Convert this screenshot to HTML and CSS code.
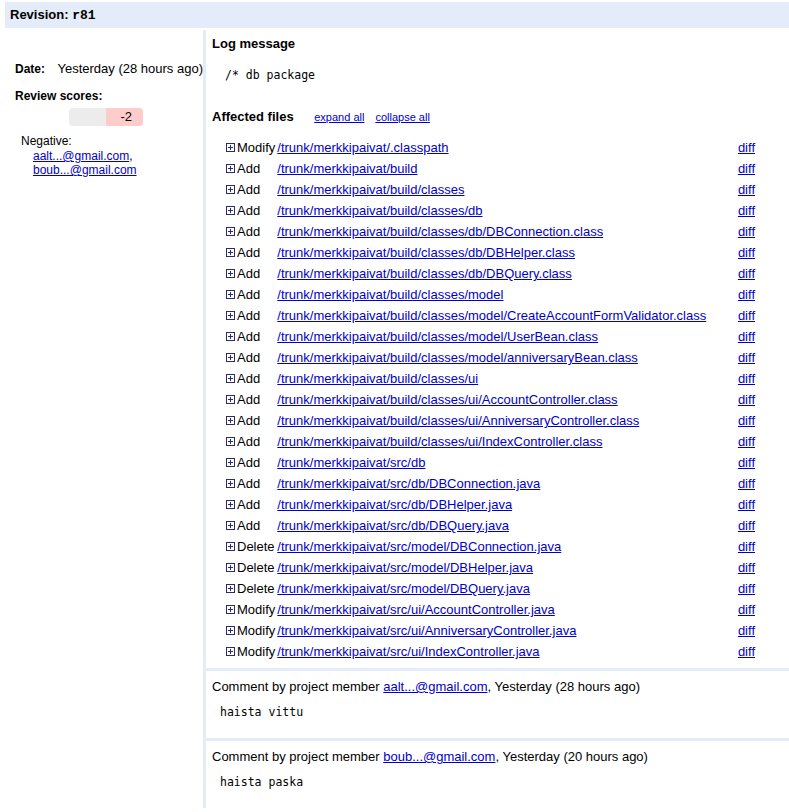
FILE: index.html
```html
<!DOCTYPE html>
<html>
<head>
<meta charset="utf-8">
<link rel="stylesheet" href="styles.css">
</head>
<body>
<div class="header">Revision: <span class="rev">r81</span></div>
<div class="layout">
  <div class="side">
    <div class="date-row"><span class="label">Date:</span><span>Yesterday (28 hours ago)</span></div>
    <div class="scores-title">Review scores:</div>
    <div class="scorebar"><span class="neutral"></span><span class="neg">-2</span></div>
    <div class="voters">
      <div>Negative:</div>
      <div class="voter-list"><a href="#">aalt...@gmail.com</a>,<br><a href="#">boub...@gmail.com</a></div>
    </div>
  </div>
  <div class="main">
    <div class="section files-section">
      <div class="title">Log message</div>
      <pre class="logmsg">/* db package</pre>
      <div class="title affected">Affected files <a class="small" href="#">expand all</a><a class="small" href="#">collapse all</a></div>
      <div class="files" id="files"></div>
    </div>
    <div class="section comment">
      <div>Comment by project member <a href="#">aalt...@gmail.com</a>, Yesterday (28 hours ago)</div>
      <pre class="ctext">haista vittu</pre>
    </div>
    <div class="section comment">
      <div>Comment by project member <a href="#">boub...@gmail.com</a>, Yesterday (20 hours ago)</div>
      <pre class="ctext">haista paska</pre>
    </div>
  </div>
</div>
<script src="script.js"></script>
</body>
</html>
```
FILE: script.js
```js
var rows = [
 ["Modify","/trunk/merkkipaivat/.classpath"],
 ["Add","/trunk/merkkipaivat/build"],
 ["Add","/trunk/merkkipaivat/build/classes"],
 ["Add","/trunk/merkkipaivat/build/classes/db"],
 ["Add","/trunk/merkkipaivat/build/classes/db/DBConnection.class"],
 ["Add","/trunk/merkkipaivat/build/classes/db/DBHelper.class"],
 ["Add","/trunk/merkkipaivat/build/classes/db/DBQuery.class"],
 ["Add","/trunk/merkkipaivat/build/classes/model"],
 ["Add","/trunk/merkkipaivat/build/classes/model/CreateAccountFormValidator.class"],
 ["Add","/trunk/merkkipaivat/build/classes/model/UserBean.class"],
 ["Add","/trunk/merkkipaivat/build/classes/model/anniversaryBean.class"],
 ["Add","/trunk/merkkipaivat/build/classes/ui"],
 ["Add","/trunk/merkkipaivat/build/classes/ui/AccountController.class"],
 ["Add","/trunk/merkkipaivat/build/classes/ui/AnniversaryController.class"],
 ["Add","/trunk/merkkipaivat/build/classes/ui/IndexController.class"],
 ["Add","/trunk/merkkipaivat/src/db"],
 ["Add","/trunk/merkkipaivat/src/db/DBConnection.java"],
 ["Add","/trunk/merkkipaivat/src/db/DBHelper.java"],
 ["Add","/trunk/merkkipaivat/src/db/DBQuery.java"],
 ["Delete","/trunk/merkkipaivat/src/model/DBConnection.java"],
 ["Delete","/trunk/merkkipaivat/src/model/DBHelper.java"],
 ["Delete","/trunk/merkkipaivat/src/model/DBQuery.java"],
 ["Modify","/trunk/merkkipaivat/src/ui/AccountController.java"],
 ["Modify","/trunk/merkkipaivat/src/ui/AnniversaryController.java"],
 ["Modify","/trunk/merkkipaivat/src/ui/IndexController.java"]
];
var icon = '<svg class="plus" width="9" height="9" viewBox="0 0 9 9"><rect x="0.5" y="0.5" width="8" height="8" fill="#fff" stroke="#2b2b66"/><path d="M2 4.5H7M4.5 2V7" stroke="#2b2b66" stroke-width="1"/></svg>';
var html = "";
rows.forEach(function(r){
  html += '<div class="act">' + icon + '<span>' + r[0] + '</span></div>' +
          '<div class="path"><a href="#">' + r[1] + '</a></div>' +
          '<div class="diff"><a href="#">diff</a></div>';
});
document.getElementById("files").innerHTML = html;
```
FILE: styles.css
```css
body {
  margin: 0;
  padding: 2px 0 0 5px;
  font-family: "Liberation Sans", Arial, sans-serif;
  font-size: 13px;
  color: #000;
  background: #fff;
}
a { color: #0000cc; }
.header {
  background: #e5ecf9;
  height: 26px;
  line-height: 26px;
  padding-left: 5px;
  font-weight: bold;
}
.rev {
  font-family: "Liberation Mono", "Courier New", monospace;
  font-size: 13px;
}
.layout {
  display: flex;
  margin-top: 2px;
}
.side {
  width: 198px;
  flex: none;
  padding-top: 31px;
  line-height: 16px;
  white-space: nowrap;
}
.date-row {
  display: flex;
  padding-left: 10px;
}
.date-row .label {
  font-weight: bold;
  width: 44px;
  font-size: 12px;
}
.scores-title {
  font-weight: bold;
  padding-left: 10px;
  margin-top: 11px;
  font-size: 12px;
}
.scorebar {
  display: flex;
  margin: 4px 0 0 64px;
  width: 74px;
  height: 18px;
  border-radius: 4px;
  overflow: hidden;
}
.scorebar .neutral { width: 37px; background: #ececec; }
.scorebar .neg {
  width: 37px;
  background: #ffcccc;
  text-align: right;
  padding-right: 11px;
  box-sizing: border-box;
  line-height: 18px;
}
.voters {
  padding-left: 16px;
  margin-top: 8px;
  line-height: 14px;
  font-size: 12px;
}
.voter-list { padding-left: 12px; margin-top: 1px; }
.main {
  flex: 1;
  border-left: 3px solid #e5ecf9;
}
.section { padding: 6px 6px 6px 6px; }
.title {
  font-weight: bold;
  line-height: 16px;
}
.logmsg, .ctext {
  font-family: "DejaVu Sans Mono", monospace;
  font-size: 11.5px;
  line-height: 14px;
  margin: 16px 0 0 13px;
}
.affected { margin-top: 27px; }
.small {
  font-weight: normal;
  font-size: 11px;
  margin-left: 17px;
}
.small + .small { margin-left: 11px; }
.files {
  display: grid;
  grid-template-columns: auto 1fr auto;
  column-gap: 2px;
  margin: 12px 28px 0 14px;
}
.files > div {
  height: 21px;
  line-height: 21px;
  white-space: nowrap;
}
.act { display: flex; align-items: center; gap: 2px; }
.plus { display: block; flex: none; }
.comment {
  border-top: 3px solid #e5ecf9;
  padding: 8px 6px 19px 6px;
  line-height: 16px;
}
.comment .ctext {
  margin: 10px 0 0 8px;
}
```
